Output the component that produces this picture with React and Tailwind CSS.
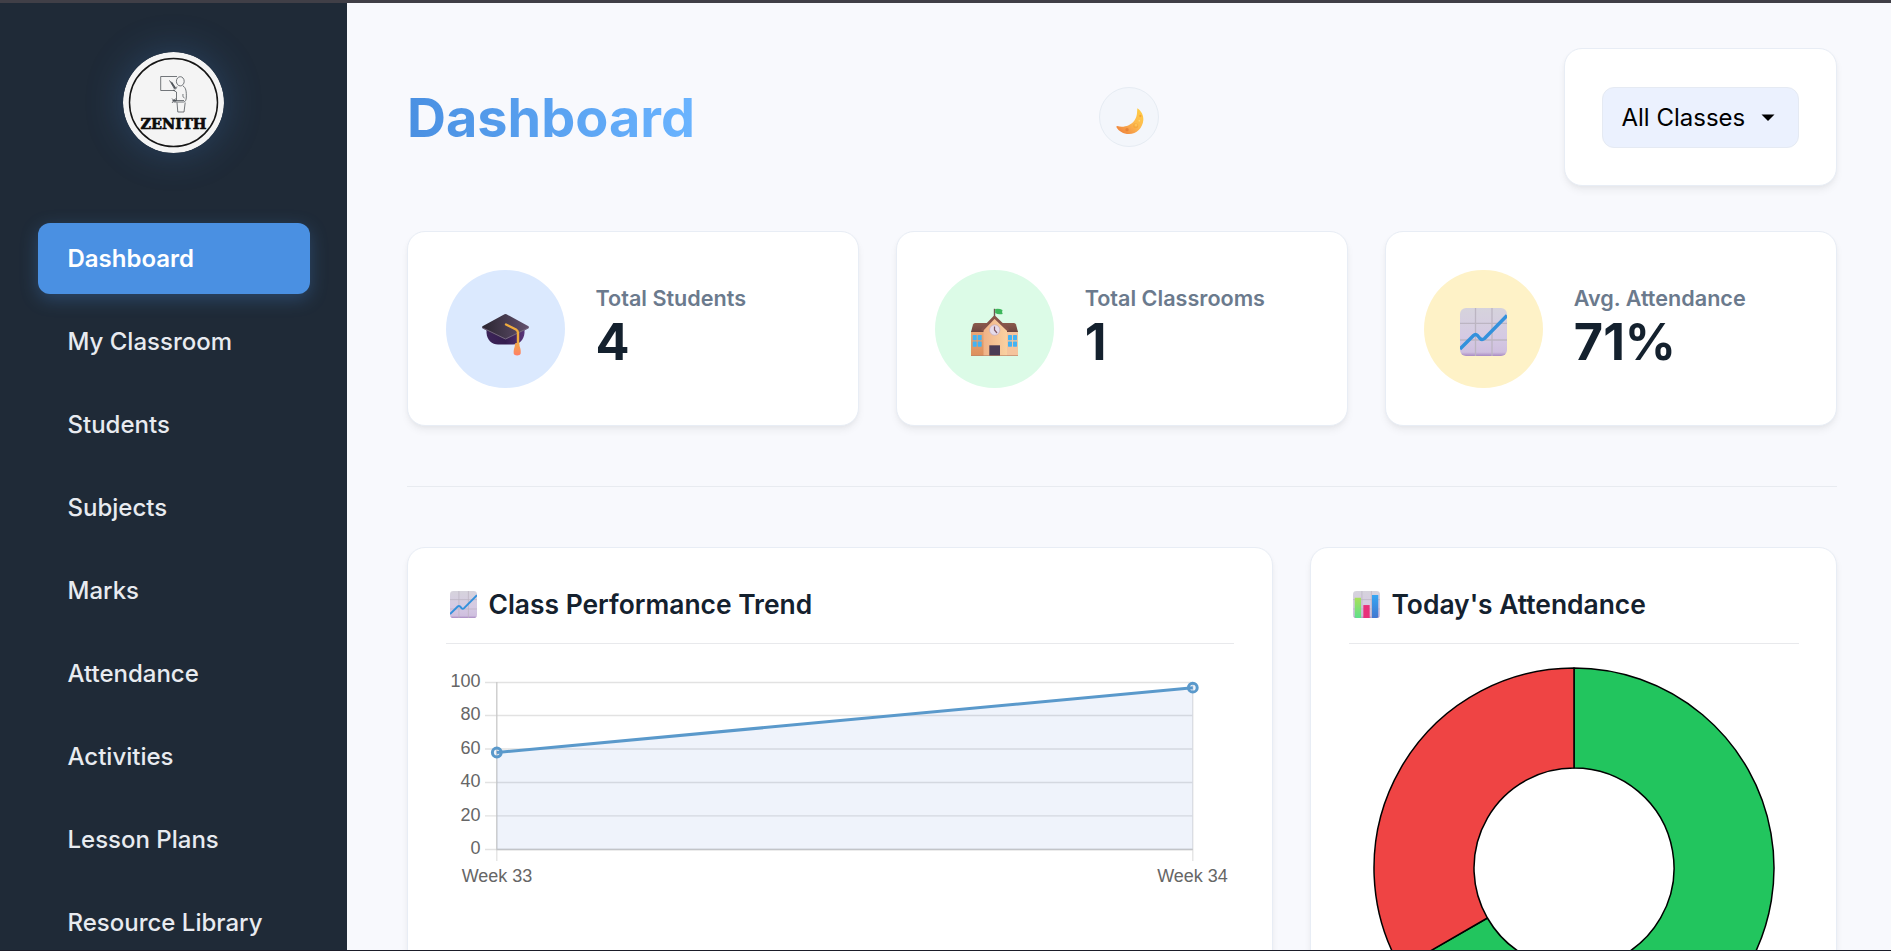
import React from "react";

const NAV = [
  "Dashboard",
  "My Classroom",
  "Students",
  "Subjects",
  "Marks",
  "Attendance",
  "Activities",
  "Lesson Plans",
  "Resource Library",
];

function Logo() {
  return (
    <svg viewBox="0 0 101 101" className="size-[101px] rounded-full shadow-[0_0_38px_rgba(74,144,226,0.25)]">
      <circle cx="50.5" cy="50.5" r="50.5" fill="#f4f4f4" />
      <circle cx="50.5" cy="50.5" r="44" fill="none" stroke="#161616" strokeWidth="1.5" />
      <g fill="none" stroke="#50555b" strokeWidth="0.8" strokeLinejoin="round">
        <path d="M54 24.500H37.700V38.500H52" />
        <ellipse cx="57.300" cy="29.300" rx="3.900" ry="4.600" />
        <path d="M54 34.500c-1 3-2 3-2.500 2.500L47.500 30M46 28.500l3 2.200M50 38l3.500 2v8.500M60 34c3 1.500 3.500 6 3.300 11 0 3-1 5-2.800 5h-10M60 42c-.3 2 0 3.500 1.500 4M53 48.500h8M49 46.500l3.500 3.500M49 51l3.500-4.500M54 50.500l.8 9.500h6.200l1.200-9.500" />
        <path d="M48.500 30.500l4 6M49.500 48.600h4" strokeWidth="1.500" />
      </g>
      <text
        x="17.500"
        y="77.300"
        textLength="66"
        lengthAdjust="spacingAndGlyphs"
        fontSize="15.500"
        fontWeight="700"
        fill="#0c0c0c"
        stroke="#0c0c0c"
        strokeWidth="0.7"
        className="font-['DejaVu_Serif',serif]"
      >
        ZENITH
      </text>
    </svg>
  );
}

function Moon() {
  return (
    <svg viewBox="0 0 84 78" className="relative left-px top-[4px] h-[26px] w-[28px]">
      <defs>
        <linearGradient id="moon" x1="1" y1="0" x2="0.1" y2="1">
          <stop offset="0" stopColor="#ffcf3f" />
          <stop offset="0.5" stopColor="#fdb952" />
          <stop offset="1" stopColor="#ee7f3a" />
        </linearGradient>
      </defs>
      <path d="M64 1C76 9 83 22 82 36C80 60 62 78 39 78C22 78 8 70 1 57C1 55 2 54 4 54C14 58 26 57 38 52C52 46 62 31 63 16Z" fill="url(#moon)" />
      <circle cx="59" cy="53" r="7.500" fill="#f6a83f" />
      <circle cx="60" cy="51" r="4.500" fill="#fdc257" />
      <circle cx="73" cy="24" r="3.500" fill="#f5a338" />
      <circle cx="33" cy="65" r="5" fill="#e88235" />
      <circle cx="70" cy="38" r="2.500" fill="#ffd577" />
    </svg>
  );
}

function GradCap() {
  return (
    <svg viewBox="0 0 47 48" className="relative top-[3px] h-[48px] w-[47px]">
      <defs>
        <linearGradient id="capTop" x1="0" y1="0.5" x2="1" y2="0.5">
          <stop offset="0" stopColor="#2a2530" />
          <stop offset="1" stopColor="#62506e" />
        </linearGradient>
        <linearGradient id="capBase" x1="0" y1="0" x2="1" y2="0">
          <stop offset="0" stopColor="#3c2458" />
          <stop offset="0.5" stopColor="#341d4f" />
          <stop offset="1" stopColor="#593579" />
        </linearGradient>
        <linearGradient id="tassel" x1="0" y1="0" x2="0" y2="1">
          <stop offset="0" stopColor="#f2a94a" />
          <stop offset="1" stopColor="#ff7e66" />
        </linearGradient>
      </defs>
      <path d="M4.500 20V25C5 32 10 36.500 16 36.500H31C38 36.500 42 31 42.500 25V20Z" fill="url(#capBase)" />
      <path d="M22.500 6.300Q23.500 5.700 24.500 6.300L46.500 18.200Q47.500 19.500 46 20.600L25 31Q23.500 31.600 22 31L1 20.600Q-.5 19.500 .5 18.200Z" fill="url(#capTop)" />
      <path d="M.5 19.800L23.500 31L46.500 19.800" fill="none" stroke="#756680" strokeWidth="1" />
      <path d="M24 16.500L34 21.500Q36 22.700 36 25V37" fill="none" stroke="#efab3e" strokeWidth="2.400" strokeLinecap="round" />
      <path d="M34 35h3.500c.8 2 .4 2.500 1 4 .7 2 1 4 .8 6.500-.3 2.500-6.800 2.500-7 0-.2-2.500.2-4.500.9-6.500.4-1.500.1-2 .8-4Z" fill="url(#tassel)" transform="translate(-.6 0)" />
    </svg>
  );
}

function School() {
  return (
    <svg viewBox="0 0 47 48" className="relative top-[3px] h-[48px] w-[47px]">
      <defs>
        <linearGradient id="hall" x1="0" y1="0" x2="1" y2="0">
          <stop offset="0" stopColor="#efb287" />
          <stop offset="1" stopColor="#fad1a1" />
        </linearGradient>
        <linearGradient id="wingL" x1="0" y1="0" x2="0" y2="1">
          <stop offset="0" stopColor="#e9a777" />
          <stop offset="1" stopColor="#dd8f5c" />
        </linearGradient>
        <linearGradient id="roof" x1="0" y1="0" x2="0" y2="1">
          <stop offset="0" stopColor="#8b5a4c" />
          <stop offset="1" stopColor="#6e4540" />
        </linearGradient>
      </defs>
      <rect x="0" y="23" width="14" height="25" fill="url(#wingL)" />
      <rect x="35" y="23" width="12" height="25" fill="#f5c49d" />
      <path d="M4 15H43Q44.500 15 45 16.500L47 24H0L2 16.500Q2.500 15 4 15Z" fill="url(#roof)" />
      <path d="M12.500 21L23.500 8.500L36 21V48H12.500Z" fill="url(#hall)" />
      <path d="M11.500 21.500L23.500 9L36.500 21.500" fill="none" stroke="#875348" strokeWidth="2.600" strokeLinecap="round" strokeLinejoin="round" />
      <path d="M23.500 8V.8" stroke="#6d5550" strokeWidth="1.400" />
      <path d="M24.200 1Q28 0 31.500 2Q30.500 4 31.700 6Q27 7 24.200 5Z" fill="#3eb65c" />
      <circle cx="23.700" cy="22" r="5.200" fill="#e6dbea" stroke="#c4abbd" strokeWidth="0.700" />
      <path d="M23.500 18.500V22L26 25" fill="none" stroke="#805660" strokeWidth="1.200" />
      <g fill="#43b3f3">
        <rect x="1.700" y="27" width="4" height="5.200" rx=".6" />
        <rect x="6.700" y="27" width="4" height="5.200" rx=".6" />
        <rect x="1.700" y="33.500" width="4" height="5.200" rx=".6" />
        <rect x="6.700" y="33.500" width="4" height="5.200" rx=".6" />
        <rect x="37" y="27" width="4" height="5.200" rx=".6" />
        <rect x="42" y="27" width="4" height="5.200" rx=".6" />
        <rect x="37" y="33.500" width="4" height="5.200" rx=".6" />
        <rect x="42" y="33.500" width="4" height="5.200" rx=".6" />
      </g>
      <rect x="18.300" y="37.300" width="10.700" height="10.700" fill="#4a3b55" />
      <path d="M0 47.600H47" stroke="#b98467" strokeWidth=".7" />
    </svg>
  );
}

function Sheet({ id }) {
  return (
    <>
      <defs>
        <linearGradient id={id} x1="0" y1="0" x2="0" y2="1">
          <stop offset="0" stopColor="#d6d3dc" />
          <stop offset="0.6" stopColor="#d5cae3" />
          <stop offset="0.92" stopColor="#cfbfdf" />
          <stop offset="1" stopColor="#a98bc2" />
        </linearGradient>
      </defs>
      <rect width="47" height="48" rx="6" fill={`url(#${id})`} />
      <path d="M15.500 0V48M32 0V48M0 15.300H47M0 32H47" stroke="#bcb5c2" strokeWidth="1.300" />
    </>
  );
}

function TrendIcon({ id, className }) {
  return (
    <svg viewBox="0 0 47 48" preserveAspectRatio="none" className={className}>
      <Sheet id={id} />
      <path
        d="M0 41L13.500 27.500Q15.500 25.500 17.500 27.500L20 30.500Q22 32.500 24.500 30.500L47 7.500"
        fill="none"
        stroke="#3391dc"
        strokeWidth="3.400"
        strokeLinejoin="round"
      />
    </svg>
  );
}

function BarsIcon({ className }) {
  return (
    <svg viewBox="0 0 47 48" preserveAspectRatio="none" className={className}>
      <defs>
        <linearGradient id="barGreen" x1="0" y1="0" x2="0" y2="1">
          <stop offset="0" stopColor="#a9e05a" />
          <stop offset="1" stopColor="#5fe08c" />
        </linearGradient>
        <linearGradient id="barBlue" x1="0" y1="0" x2="0" y2="1">
          <stop offset="0" stopColor="#36a6f3" />
          <stop offset="1" stopColor="#4277cf" />
        </linearGradient>
      </defs>
      <Sheet id="sheetBars" />
      <path d="M3 12H14V48H6Q3 48 3 45Z" fill="url(#barGreen)" />
      <rect x="18" y="25" width="11" height="23" fill="#e8307a" />
      <path d="M33 7H44V45Q44 48 41 48H33Z" fill="url(#barBlue)" />
    </svg>
  );
}

const CARD =
  "rounded-[18px] border border-[#e8edf5] bg-white shadow-[0_5px_8px_-1px_rgba(0,0,0,0.06),0_2px_5px_-1px_rgba(0,0,0,0.04)]";

function StatCard({ icon, tint, label, value }) {
  return (
    <div className={`${CARD} flex h-[195px] items-center gap-[30.5px] px-[37.5px]`}>
      <div className={`flex h-[118px] w-[119.500px] shrink-0 items-center justify-center rounded-full ${tint}`}>{icon}</div>
      <div className="-mt-[3px] whitespace-nowrap">
        <p className="text-[21.6px] font-semibold leading-[30px] text-[#6b7a8d]">{label}</p>
        <p className="text-[50.4px] font-bold leading-[58px] text-[#14212e]">{value}</p>
      </div>
    </div>
  );
}

function PanelTitle({ icon, children }) {
  return (
    <h2 className="flex h-[58px] items-start gap-[12px] whitespace-nowrap border-b border-[#e8e9ec] pl-[4px] text-[26.4px] font-semibold leading-[36px] text-[#14212e]">
      {icon}
      <span>{children}</span>
    </h2>
  );
}

function TrendChart() {
  const ticks = [
    [100, 28.5],
    [80, 61.5],
    [60, 95],
    [40, 128.5],
    [20, 161.8],
    [0, 195.5],
  ];
  return (
    <svg viewBox="0 0 788 250" className="mt-[10px] h-[250px] w-[788px] font-['Liberation_Sans',Arial,sans-serif]">
      {ticks.map(([v, y]) => (
        <g key={v}>
          <path d={`M39 ${y}H747`} stroke="#e2e2e2" strokeWidth="1.300" />
          <text x="34.500" y={y + 4.900} textAnchor="end" fontSize="18" fill="#666">
            {v}
          </text>
        </g>
      ))}
      <path d="M746.800 28V207" stroke="#e2e2e2" strokeWidth="1.300" />
      <path d="M50.800 195V207" stroke="#e2e2e2" strokeWidth="1.300" />
      <path d="M50.800 28V195.500H746.800" fill="none" stroke="#c8c8c8" strokeWidth="1.300" />
      <path d="M50.800 98.500L746.800 33.700V195.500H50.800Z" fill="rgba(74,126,208,0.092)" />
      <path d="M50.800 98.500L746.800 33.700" stroke="#5a99cb" strokeWidth="3" />
      <circle cx="50.800" cy="98.500" r="4.400" fill="rgba(74,134,212,0.1)" stroke="#5a99cb" strokeWidth="3" />
      <circle cx="746.800" cy="33.700" r="4.400" fill="rgba(74,134,212,0.1)" stroke="#5a99cb" strokeWidth="3" />
      <g fontSize="18" fill="#666" textAnchor="middle">
        <text x="51" y="227.500">Week 33</text>
        <text x="746.500" y="227.500">Week 34</text>
      </g>
    </svg>
  );
}

function Donut() {
  return (
    <svg viewBox="0 0 404 404" className="mx-auto mt-[22px] block size-[404px]">
      <g stroke="#000" strokeWidth="1.500" strokeLinejoin="round">
        <path d="M202 2A200 200 0 1 1 28.800 302L115.400 252A100 100 0 1 0 202 102Z" fill="#22c55e" />
        <path d="M28.800 302A200 200 0 0 1 202 2V102A100 100 0 0 0 115.400 252Z" fill="#ef4444" />
      </g>
    </svg>
  );
}

export default function App() {
  return (
    <div className="flex h-[951px] w-[1891px] flex-col overflow-hidden border-b border-[#1b1d29] border-t-[3px] border-t-[#403f47] bg-[#f8f9fd] font-['Inter',sans-serif]">
      <div className="flex min-h-0 flex-1">
        <aside className="flex w-[347px] shrink-0 flex-col bg-[#1f2a37]">
          <div className="flex justify-center pl-[0.500px] pt-[49px]">
            <Logo />
          </div>
          <nav className="mt-[70px] flex flex-col gap-3 pl-[38px] pr-[37px]">
            {NAV.map((item, i) => (
              <a
                key={item}
                className={
                  i === 0
                    ? "flex h-[71px] shrink-0 items-center whitespace-nowrap rounded-xl bg-[#4a90e2] px-[29.500px] text-[24px] font-semibold text-white shadow-[0_5px_18px_rgba(74,144,226,0.3)]"
                    : "flex h-[71px] shrink-0 items-center whitespace-nowrap rounded-xl px-[29.500px] text-[24px] font-medium text-[#e8ebf0]"
                }
              >
                {item}
              </a>
            ))}
          </nav>
        </aside>
        <main className="min-w-0 flex-1 overflow-hidden pl-[60px] pr-[54px] pt-[45px]">
          <header className="flex h-[138px] items-center justify-between">
            <h1 className="bg-linear-to-r from-[#4a90e2] to-[#6ab4ff] bg-clip-text pt-[2px] text-[54px] font-bold leading-[70px] text-transparent">
              Dashboard
            </h1>
            <button className="flex size-[60px] items-center justify-center rounded-full border border-[#e6ecf3] bg-[#f3f6fb]">
              <Moon />
            </button>
            <div className={`${CARD} flex h-[138px] w-[273px] items-center justify-center`}>
              <div className="flex h-[61px] w-[197px] items-center justify-between whitespace-nowrap rounded-xl border border-[#e5eaf3] bg-[#ebf1fe] pl-[18.500px] pr-[23.500px] pt-px text-[24px] text-black">
                <span>All Classes</span>
                <svg viewBox="0 0 14 8" className="h-[8px] w-[14px]">
                  <path d="M.5 .5H13.500L7 7Z" fill="#000" />
                </svg>
              </div>
            </div>
          </header>
          <section className="mt-[45px] grid grid-cols-3 gap-[37.500px]">
            <StatCard icon={<GradCap />} tint="bg-[#dbe9fe]" label="Total Students" value="4" />
            <StatCard icon={<School />} tint="bg-[#dcfbe7]" label="Total Classrooms" value="1" />
            <StatCard
              icon={<TrendIcon id="sheetLarge" className="relative top-[3px] h-[48px] w-[47px]" />}
              tint="bg-[#fef2c7]"
              label="Avg. Attendance"
              value="71%"
            />
          </section>
          <hr className="mb-[60px] mt-[60px] border-[#e8ebf0]" />
          <section className="flex gap-[37.500px]">
            <div className={`${CARD} h-[520px] w-[865.500px] px-[37.500px] pt-[38px]`}>
              <PanelTitle icon={<TrendIcon id="sheetSmall" className="mt-[5px] h-[27px] w-[27px]" />}>
                Class Performance Trend
              </PanelTitle>
              <TrendChart />
            </div>
            <div className={`${CARD} h-[520px] flex-1 px-[37.500px] pt-[38px]`}>
              <PanelTitle icon={<BarsIcon className="mt-[5px] h-[27px] w-[27px]" />}>Today's Attendance</PanelTitle>
              <Donut />
            </div>
          </section>
        </main>
      </div>
    </div>
  );
}
